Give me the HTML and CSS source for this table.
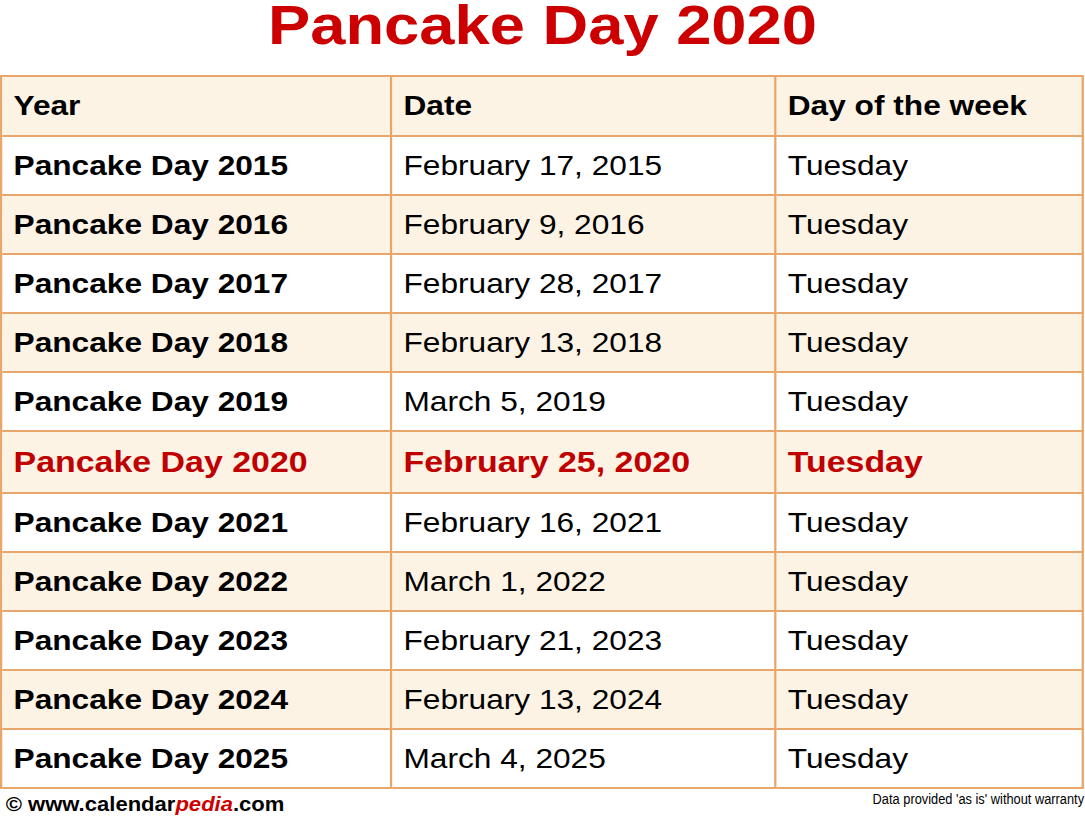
FILE: index.html
```html
<!DOCTYPE html>
<html lang="en">
<head>
<meta charset="utf-8">
<title>Pancake Day 2020</title>
<link rel="stylesheet" href="styles.css">
</head>
<body>
<div class="page">
  <h1 class="title">Pancake Day 2020</h1>
  <table class="dates">
    <thead>
      <tr class="head"><th>Year</th><th>Date</th><th>Day of the week</th></tr>
    </thead>
    <tbody>
      <tr><td class="year">Pancake Day 2015</td><td>February 17, 2015</td><td>Tuesday</td></tr>
      <tr class="alt"><td class="year">Pancake Day 2016</td><td>February 9, 2016</td><td>Tuesday</td></tr>
      <tr><td class="year">Pancake Day 2017</td><td>February 28, 2017</td><td>Tuesday</td></tr>
      <tr class="alt"><td class="year">Pancake Day 2018</td><td>February 13, 2018</td><td>Tuesday</td></tr>
      <tr><td class="year">Pancake Day 2019</td><td>March 5, 2019</td><td>Tuesday</td></tr>
      <tr class="alt current"><td class="year">Pancake Day 2020</td><td>February 25, 2020</td><td>Tuesday</td></tr>
      <tr><td class="year">Pancake Day 2021</td><td>February 16, 2021</td><td>Tuesday</td></tr>
      <tr class="alt"><td class="year">Pancake Day 2022</td><td>March 1, 2022</td><td>Tuesday</td></tr>
      <tr><td class="year">Pancake Day 2023</td><td>February 21, 2023</td><td>Tuesday</td></tr>
      <tr class="alt"><td class="year">Pancake Day 2024</td><td>February 13, 2024</td><td>Tuesday</td></tr>
      <tr><td class="year">Pancake Day 2025</td><td>March 4, 2025</td><td>Tuesday</td></tr>
    </tbody>
  </table>
  <div class="footer">
    <span class="brand">© www.calendar<em>pedia</em>.com</span>
    <span class="note">Data provided 'as is' without warranty</span>
  </div>
</div>
</body>
</html>
```

FILE: styles.css
```css
html, body {
  margin: 0;
  padding: 0;
  background: #ffffff;
  overflow: hidden;
}

.page {
  width: 960px;
  transform: scaleX(1.130208);
  transform-origin: 0 0;
  font-family: "Liberation Sans", Arial, sans-serif;
  color: #000000;
}

.title {
  margin: 0 0 25px 0;
  height: 50px;
  font-size: 56px;
  line-height: 50px;
  font-weight: bold;
  color: #cc0000;
  text-align: center;
}

.dates {
  width: 959px;
  border-collapse: separate;
  border-spacing: 0;
  border-top: 2px solid #e9a66b;
  border-left: 2px solid #e9a66b;
  table-layout: fixed;
}

.dates th,
.dates td {
  border-right: 2px solid #e9a66b;
  border-bottom: 2px solid #e9a66b;
  padding: 0 0 0 10px;
  text-align: left;
  vertical-align: middle;
  font-size: 28px;
  white-space: nowrap;
}

.dates th:nth-child(1), .dates td:nth-child(1) { width: 333px; }
.dates th:nth-child(2), .dates td:nth-child(2) { width: 328px; }

.dates th { font-weight: bold; }
.dates td { font-weight: normal; }
.dates td.year { font-weight: bold; }

.dates tr { height: 59px; }
.dates tr.head { height: 60px; background: #fdf3e4; }
.dates tr.alt { background: #fdf3e4; }

.dates tr.current { height: 62px; }
.dates tr.current td {
  font-size: 30px;
  font-weight: bold;
  color: #c00000;
}

.footer {
  display: flex;
  justify-content: space-between;
  align-items: flex-start;
}

.brand {
  margin-top: 4px;
  padding-left: 5px;
  font-size: 19.5px;
  line-height: 22px;
  font-weight: bold;
}

.brand em {
  color: #cc0000;
  font-style: italic;
}

.note {
  display: inline-block;
  margin-top: 2px;
  padding-right: 1px;
  font-size: 14px;
  line-height: 16px;
  white-space: nowrap;
  transform: scaleX(0.81);
  transform-origin: right top;
}
```
